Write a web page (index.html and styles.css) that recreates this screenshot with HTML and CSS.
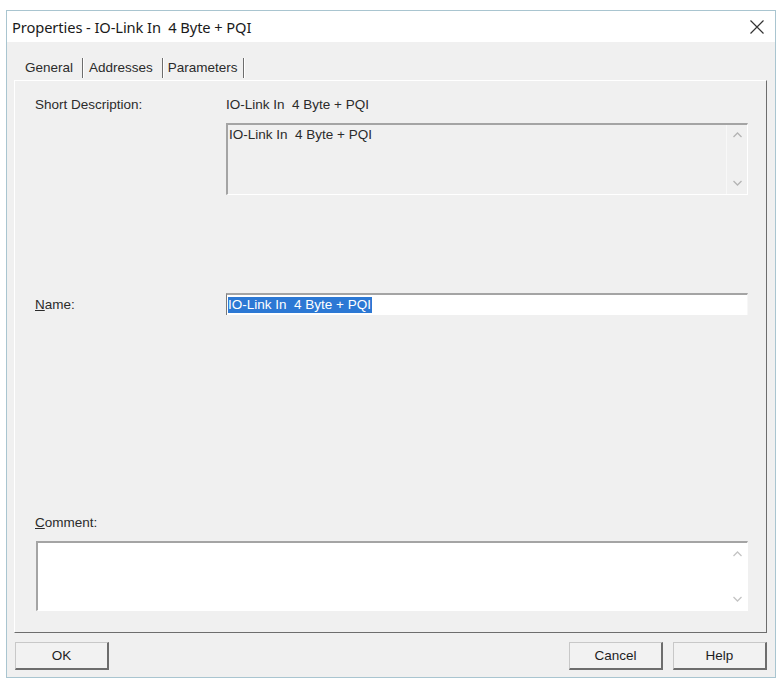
FILE: index.html
```html
<!DOCTYPE html>
<html lang="en">
<head>
    <meta charset="UTF-8">
    <meta name="viewport" content="width=device-width, initial-scale=1.0">
    <title>Properties - IO-Link In 4 Byte + PQI</title>
    <link rel="stylesheet" href="styles.css">
</head>
<body>
    <div class="window">
        <div class="titlebar">
            <span class="title">Properties - IO-Link In  4 Byte + PQI</span>
            <button class="close" title="Close">
                <svg width="14" height="14" viewBox="0 0 14 14">
                    <path d="M0.5 0.5 L13.5 13.5 M13.5 0.5 L0.5 13.5" stroke="#333" stroke-width="1.2" fill="none"/>
                </svg>
            </button>
        </div>

        <div class="dialog">
            <div class="tabs">
                <span class="tab first">General</span>
                <span class="tab">Addresses</span>
                <span class="tab last">Parameters</span>
            </div>

            <div class="panel">
                <div class="row">
                    <span class="label">Short Description:</span>
                    <div class="field">
                        <span class="value">IO-Link In  4 Byte + PQI</span>
                        <div class="textbox readonly">
                            <span class="text">IO-Link In  4 Byte + PQI</span>
                            <div class="scroll">
                                <svg width="9" height="6" viewBox="0 0 9 6"><path d="M0.5 5 L4.5 1 L8.5 5" stroke="#b4b4b4" stroke-width="1.3" fill="none"/></svg>
                                <svg width="9" height="6" viewBox="0 0 9 6"><path d="M0.5 1 L4.5 5 L8.5 1" stroke="#b4b4b4" stroke-width="1.3" fill="none"/></svg>
                            </div>
                        </div>
                    </div>
                </div>

                <div class="row name-row">
                    <span class="label"><u>N</u>ame:</span>
                    <div class="input">
                        <span class="selected">IO-Link In  4 Byte + PQI</span>
                    </div>
                </div>

                <div class="comment">
                    <span class="label"><u>C</u>omment:</span>
                    <div class="textbox comment-box">
                        <span class="text"></span>
                        <div class="scroll">
                            <svg width="9" height="6" viewBox="0 0 9 6"><path d="M0.5 5 L4.5 1 L8.5 5" stroke="#c4c4c4" stroke-width="1.3" fill="none"/></svg>
                            <svg width="9" height="6" viewBox="0 0 9 6"><path d="M0.5 1 L4.5 5 L8.5 1" stroke="#c4c4c4" stroke-width="1.3" fill="none"/></svg>
                        </div>
                    </div>
                </div>
            </div>

            <div class="buttons">
                <button class="btn">OK</button>
                <div class="right">
                    <button class="btn">Cancel</button>
                    <button class="btn">Help</button>
                </div>
            </div>
        </div>
    </div>
</body>
</html>
```

FILE: styles.css
```css
body {
    margin: 0;
    padding: 10px 0 0 6px;
    background-color: #ffffff;
    font-family: "Liberation Sans", Arial, sans-serif;
    font-size: 13.5px;
    color: #2b2b2b;
}

.window {
    width: 768px;
    height: 666px;
    border: 1px solid #a9c5d0;
    background-color: #f0f0f0;
    display: flex;
    flex-direction: column;
}

.titlebar {
    height: 31px;
    flex-shrink: 0;
    background-color: #ffffff;
    display: flex;
    align-items: center;
    justify-content: space-between;
    padding: 0 11px 0 5px;
}

.title {
    font-family: "Noto Sans", sans-serif;
    font-size: 14.7px;
    color: #1a1a1a;
    white-space: pre;
    letter-spacing: -0.1px;
}

.close {
    border: none;
    background: none;
    padding: 0;
    display: flex;
}

.dialog {
    flex: 1;
    display: flex;
    flex-direction: column;
    padding: 16px 8px 7px 7px;
}

.tabs {
    display: flex;
    height: 22px;
    flex-shrink: 0;
    padding-left: 3px;
}

.tab {
    padding: 2px 9px 0 6px;
    height: 18px;
    line-height: 15px;
    border-right: 1px solid #6d6d6d;
    box-shadow: 1px 0 0 #ffffff;
    white-space: nowrap;
}

.tab.first {
    padding-left: 8px;
}

.tab.last {
    padding-left: 5px;
    padding-right: 5px;
}

.panel {
    flex: 1;
    border-top: 1px solid #ffffff;
    border-left: 1px solid #ffffff;
    border-right: 1px solid #6d6d6d;
    border-bottom: 1px solid #6d6d6d;
    padding: 16px 18px 21px 20px;
    display: flex;
    flex-direction: column;
}

.row {
    display: flex;
}

.label {
    width: 191px;
    flex-shrink: 0;
    line-height: 15px;
    white-space: nowrap;
}

.field {
    flex: 1;
    display: flex;
    flex-direction: column;
}

.value {
    line-height: 15px;
    white-space: pre;
}

.textbox {
    display: flex;
    border-top: 2px solid #a4a4a4;
    border-left: 2px solid #a4a4a4;
    border-right: 1px solid #ffffff;
    border-bottom: 1px solid #ffffff;
}

.textbox .text {
    flex: 1;
    padding: 2px 0 0 1px;
    white-space: pre;
    line-height: 15px;
}

.readonly {
    margin-top: 11px;
    height: 69px;
    background-color: #f0f0f0;
}

.scroll {
    width: 20px;
    display: flex;
    flex-direction: column;
    justify-content: space-between;
    align-items: center;
    padding: 7px 0 8px 0;
    border-left: 1px solid #f8f8f8;
}

.name-row {
    margin-top: 98px;
    align-items: center;
}

.input {
    flex: 1;
    height: 20px;
    background-color: #ffffff;
    border-top: 2px solid #a4a4a4;
    border-left: 1px solid #7a7a7a;
    border-right: 1px solid #f7f7f7;
    display: flex;
    align-items: center;
    padding-left: 1px;
}

.selected {
    background-color: #2c78d4;
    color: #ffffff;
    white-space: pre;
    line-height: 16px;
    padding-right: 1px;
}

.comment {
    margin-top: auto;
    display: flex;
    flex-direction: column;
}

.comment-box {
    margin-top: 11px;
    margin-left: 1px;
    height: 67px;
    background-color: #ffffff;
}

.comment-box .scroll {
    border-left-color: #ffffff;
    padding: 8px 0 8px 0;
}

.buttons {
    display: flex;
    flex-shrink: 0;
    justify-content: space-between;
    padding: 9px 0 0 1px;
}

.right {
    display: flex;
    gap: 10px;
}

.btn {
    width: 94px;
    height: 28px;
    font-family: "Liberation Sans", Arial, sans-serif;
    font-size: 13.5px;
    color: #1e1e1e;
    background-color: #f2f2f2;
    border-top: 1px solid #c8c8c8;
    border-left: 1px solid #c8c8c8;
    border-right: 2px solid #6d6d6d;
    border-bottom: 2px solid #6d6d6d;
    padding: 0;
}
```
